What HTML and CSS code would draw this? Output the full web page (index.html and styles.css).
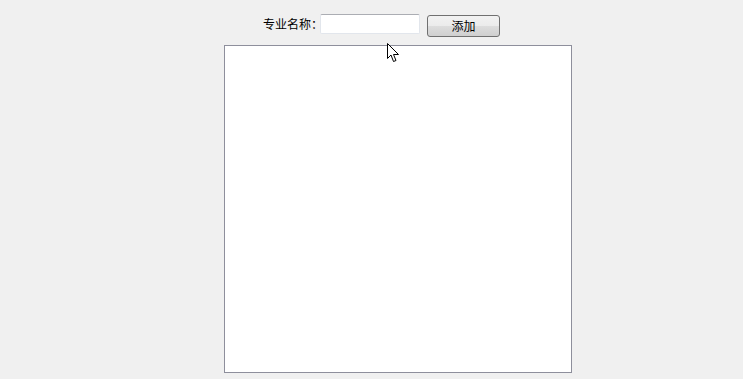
FILE: index.html
```html
<!DOCTYPE html>
<html lang="zh-CN">

<head>
    <meta charset="UTF-8">
    <meta name="viewport" content="width=device-width, initial-scale=1.0">
    <title>专业管理</title>

    <link rel="stylesheet" href="styles.css">
</head>

<body>
    <div class="toolbar">
        <label class="label" for="major">专业名称：</label>
        <input class="name" id="major" type="text">
        <button class="add">添加</button>
    </div>

    <div class="list"></div>

    <svg class="cursor" width="13" height="20" viewBox="0 0 13 20">
        <path d="M0.5 0.5 L0.5 15.5 L4 12 L6.5 18.5 L9 17.5 L6.5 11.5 L11.5 11.5 Z" fill="#fff" stroke="#000" stroke-width="1" stroke-linejoin="miter" />
    </svg>
</body>

</html>
```

FILE: styles.css
```css
* {
    margin: 0;
    padding: 0;
    box-sizing: border-box;
}

body {
    background: #f0f0f0;
    font-family: "Noto Sans CJK SC", "Liberation Sans", sans-serif;
    font-size: 12px;
    color: #000;
    height: 100vh;
    overflow: hidden;
}

.toolbar {
    display: flex;
    align-items: flex-start;
    padding-top: 14px;
    margin-left: 263px;
    height: 36px;
}

.label {
    width: 57px;
    line-height: 20px;
    white-space: nowrap;
}

.name {
    width: 100px;
    height: 20px;
    border: 1px solid #e2e6ec;
    border-top-color: #abadb3;
    border-radius: 2px;
    background: #fff;
    outline: none;
}

.add {
    width: 73px;
    height: 22px;
    margin-top: 1px;
    margin-left: 7px;
    border: 1px solid #707070;
    border-radius: 3px;
    background: linear-gradient(#f2f2f2, #ebebeb 50%, #dddddd 51%, #cfcfcf);
    font-family: inherit;
    font-size: 12px;
    line-height: 20px;
    color: #000;
}

.list {
    width: 348px;
    height: 328px;
    margin-top: 9px;
    margin-left: 224px;
    border: 1px solid #8e8f9c;
    background: #fff;
}

.cursor {
    position: absolute;
    left: 387px;
    top: 43px;
}
```
